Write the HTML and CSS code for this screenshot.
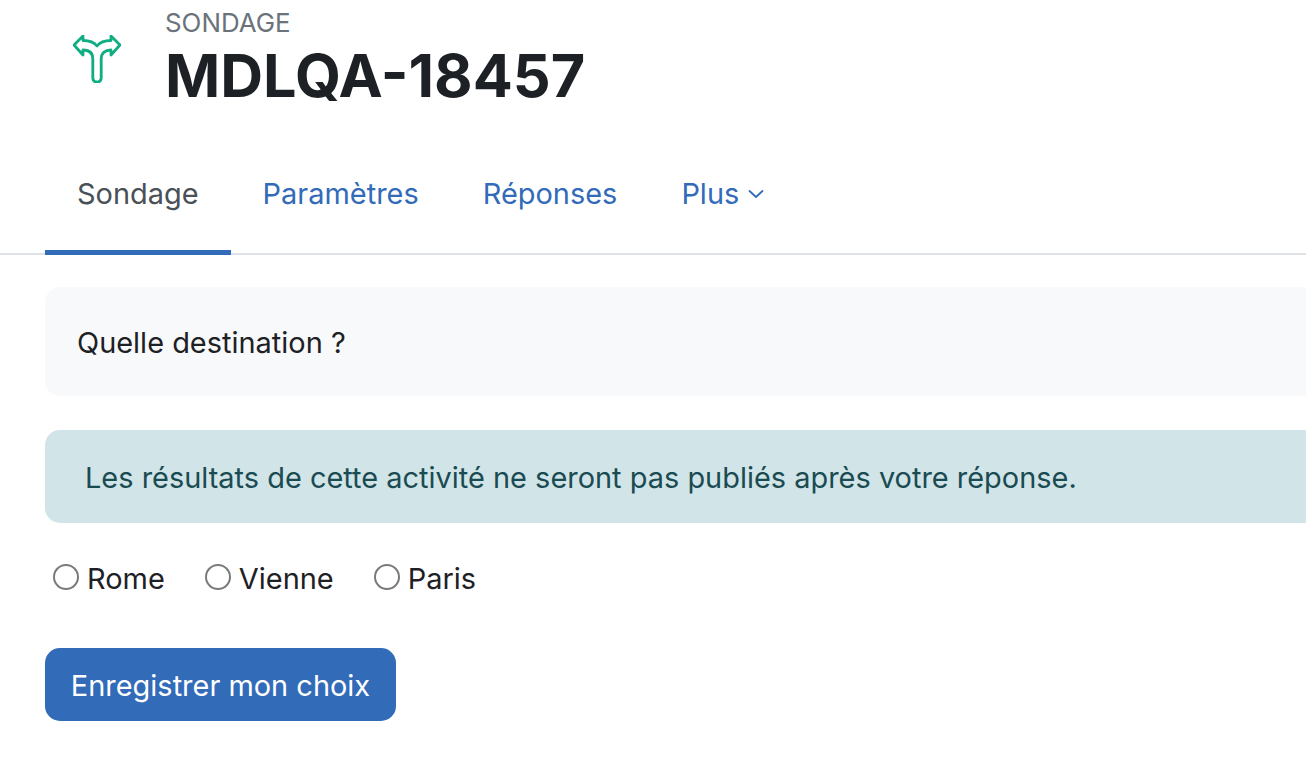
FILE: index.html
```html
<!DOCTYPE html>
<html lang="fr">
<head>
<meta charset="utf-8">
<title>MDLQA-18457</title>
<link rel="stylesheet" href="styles.css">
</head>
<body>
<div class="page">
  <header class="head">
    <div class="icon-wrap">
      <svg class="icon" viewBox="0 0 48 48" fill="none" stroke="#10ad82" stroke-width="2.800" stroke-linejoin="round" stroke-linecap="round">
        <path d="M19.800 34 V42.500 Q19.800 47 24 47 Q28.200 47 28.200 42.500 V24 C28.200 18 32 15 38 15 V20 L47 10 L38 1 V5.500 C31 5.500 27 7 24 11 C21 7 17 5.500 10 5.500 V1 L1 10 L10 20 V15 C16 15 19.800 18 19.800 24 V34"/>
      </svg>
    </div>
    <div class="titles">
      <div class="kicker">SONDAGE</div>
      <h1 class="title">MDLQA-18457</h1>
    </div>
  </header>
  <nav class="tabs">
    <a class="tab active">Sondage</a>
    <a class="tab">Paramètres</a>
    <a class="tab">Réponses</a>
    <a class="tab">Plus
      <svg class="chev" viewBox="0 0 16 10" fill="none" stroke="#326bb8" stroke-width="1.800" stroke-linecap="round" stroke-linejoin="round"><path d="M1.500 2 L8 8 L14.500 2"/></svg>
    </a>
  </nav>
  <main class="content">
    <div class="intro">Quelle destination ?</div>
    <div class="alert">Les résultats de cette activité ne seront pas publiés après votre réponse.</div>
    <div class="options">
      <label class="opt"><span class="radio"></span>Rome</label>
      <label class="opt"><span class="radio"></span>Vienne</label>
      <label class="opt"><span class="radio"></span>Paris</label>
    </div>
    <button class="btn">Enregistrer mon choix</button>
  </main>
</div>
</body>
</html>
```
FILE: styles.css
```css
* { box-sizing: border-box; }
html, body { margin: 0; height: 100%; overflow: hidden; background: #fff; }
body { font-family: Inter, "Liberation Sans", sans-serif; color: #1d2125; font-size: 28.950px; }
.page { width: 1306px; height: 776px; overflow: hidden; }
.head { display: flex; height: 149px; padding-left: 73px; }
.icon-wrap { width: 92px; padding-top: 35px; flex: none; }
.icon { display: block; width: 48px; height: 48px; }
.titles { padding-top: 8px; }
.kicker { font-size: 25.900px; line-height: 30px; color: #6a737b; }
.title { margin: 0; font-size: 59.300px; font-weight: 700; line-height: 75px; }
.tabs { display: flex; height: 106px; padding-left: 45px; border-bottom: 2px solid #dee2e6; }
.tab { display: flex; align-items: center; gap: 9px; height: 106px; padding: 0 32px 13px; color: #326bb8; border-bottom: 5px solid transparent; white-space: nowrap; }
.tab.active { color: #495057; border-bottom-color: #326bb8; }
.chev { width: 16px; height: 10px; margin-top: 1px; }
.content { padding: 32px 0 0 45px; width: 1400px; }
.intro { height: 109px; padding: 2px 32px 0; display: flex; align-items: center; background: #f8f9fa; border-radius: 15px; }
.alert { height: 93px; margin-top: 34px; padding: 2px 40px 0; display: flex; align-items: center; background: #d1e4e7; color: #1a4b52; border-radius: 15px; }
.options { display: flex; margin-top: 34px; height: 44px; align-items: center; padding: 0 0 2px 8px; gap: 40px; }
.opt { display: flex; align-items: center; gap: 8px; }
.radio { width: 26px; height: 26px; border: 2px solid #7a7a7a; border-radius: 50%; background: #fff; margin-top: -2px; }
.btn { display: block; margin-top: 47px; width: 351px; height: 73px; border: 0; padding: 2px 0 0; background: #326bb8; color: #fff; font: inherit; border-radius: 15px; }
```
